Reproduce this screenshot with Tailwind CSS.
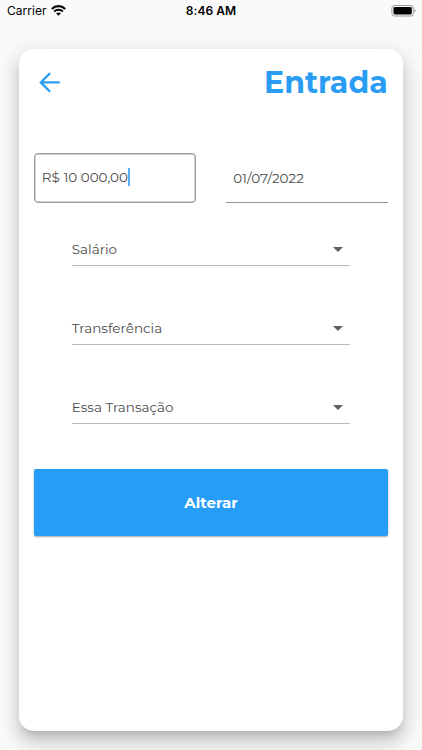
<!DOCTYPE html>
<html lang="pt-BR">
<head>
<meta charset="utf-8">
<meta name="viewport" content="width=device-width, initial-scale=1">
<title>Entrada</title>
<script src="https://cdn.jsdelivr.net/npm/@tailwindcss/browser@4"></script>
</head>
<body class="h-[750px] overflow-hidden bg-[#fafafa] font-['Montserrat',Inter,sans-serif] text-[#4c4c4c]">
<div class="flex h-full flex-col">
  <header class="grid h-[49px] shrink-0 grid-cols-3 items-start px-[7px] pt-[3px] font-['Inter',sans-serif] text-[12px] leading-4 text-black">
    <div class="flex items-center gap-[5px]">
      <span class="tracking-[0.02px]">Carrier</span>
      <svg class="-mt-px h-[11px] w-[15px]" viewBox="0 0 15 11" fill="none" stroke="#000" stroke-width="2.1"><path d="M.8 3.9C4.6.2 10.4.2 14.2 3.9M3.2 6.4c2.4-2.3 6.2-2.3 8.6 0"/><path d="M5.2 8.4c1.3-1.2 3.3-1.2 4.6 0L7.5 10.8z" fill="#000" stroke="none"/></svg>
    </div>
    <time class="text-center font-semibold tracking-[0.05px]">8:46 AM</time>
    <svg class="mt-[2px] mr-[-7px] h-3 w-[31px] justify-self-end" viewBox="0 0 31 12"><rect x=".9" y=".5" width="21.4" height="10.5" rx="2.6" fill="none" stroke="#999"/><rect x="2.5" y="2" width="18.3" height="7.5" rx="1.4"/><path d="M23.5 4c1.6.6 1.6 3 0 3.6z" fill="#999"/></svg>
  </header>
  <main class="ml-[19.3px] flex h-[681.5px] w-[383.4px] shrink-0 flex-col rounded-[15px] bg-white pr-[15px] pl-[15px] shadow-[0_7px_8px_-4px_rgba(0,0,0,0.16),0_12px_17px_2px_rgba(0,0,0,0.11),0_5px_22px_4px_rgba(0,0,0,0.09)]">
    <div class="flex h-[66px] items-center justify-between">
      <svg class="ml-1 h-6 w-6" viewBox="0 0 24 24" fill="none" stroke="#299cf4" stroke-width="2.2"><path d="M12.1 3.1 2.8 12.4l9.3 9.3M2.8 12.4h19"/></svg>
      <h1 class="mt-px text-[30px] font-bold leading-9 text-[#299cf4]">Entrada</h1>
    </div>
    <div class="mt-[38px] flex h-[50px] justify-between">
      <div class="flex h-[49.5px] w-[162px] items-center rounded-[4px] border border-[#9b9b9b] px-[6.5px] text-[13.5px] leading-5 shadow-[inset_0_0_0_0.5px_#a5a5a5]">
        <span class="-mt-0.5">R$ 10 000,00</span><span class="-mt-0.5 h-[18px] w-[2px] bg-[#5aaef5]"></span>
      </div>
      <div class="flex w-[162px] items-center border-b border-[#959595] px-[7.5px] text-[13.5px] leading-5"><span>01/07/2022</span></div>
    </div>
    <div class="mt-[31px] flex flex-col gap-[47px] px-[37.5px] text-[13.5px] leading-5">
      <div class="flex h-8 items-center justify-between border-b border-[#b9b9b9] pr-[7px]"><span class="-mt-0.5">Salário</span><svg class="h-[5px] w-[10px]" viewBox="0 0 10 5"><path d="M0 0h10L5 5z" fill="#606060"/></svg></div>
      <div class="flex h-8 items-center justify-between border-b border-[#b9b9b9] pr-[7px]"><span class="-mt-0.5">Transferência</span><svg class="h-[5px] w-[10px]" viewBox="0 0 10 5"><path d="M0 0h10L5 5z" fill="#606060"/></svg></div>
      <div class="flex h-8 items-center justify-between border-b border-[#b9b9b9] pr-[7px]"><span class="-mt-0.5">Essa Transação</span><svg class="h-[5px] w-[10px]" viewBox="0 0 10 5"><path d="M0 0h10L5 5z" fill="#606060"/></svg></div>
    </div>
    <button class="mt-[45px] h-[67px] w-full shrink-0 rounded-[2px] bg-[#269df7] text-[15px] font-bold leading-5 text-white shadow-[0_1px_2px_rgba(0,0,0,0.35)]">Alterar</button>
  </main>
</div>
</body>
</html>
